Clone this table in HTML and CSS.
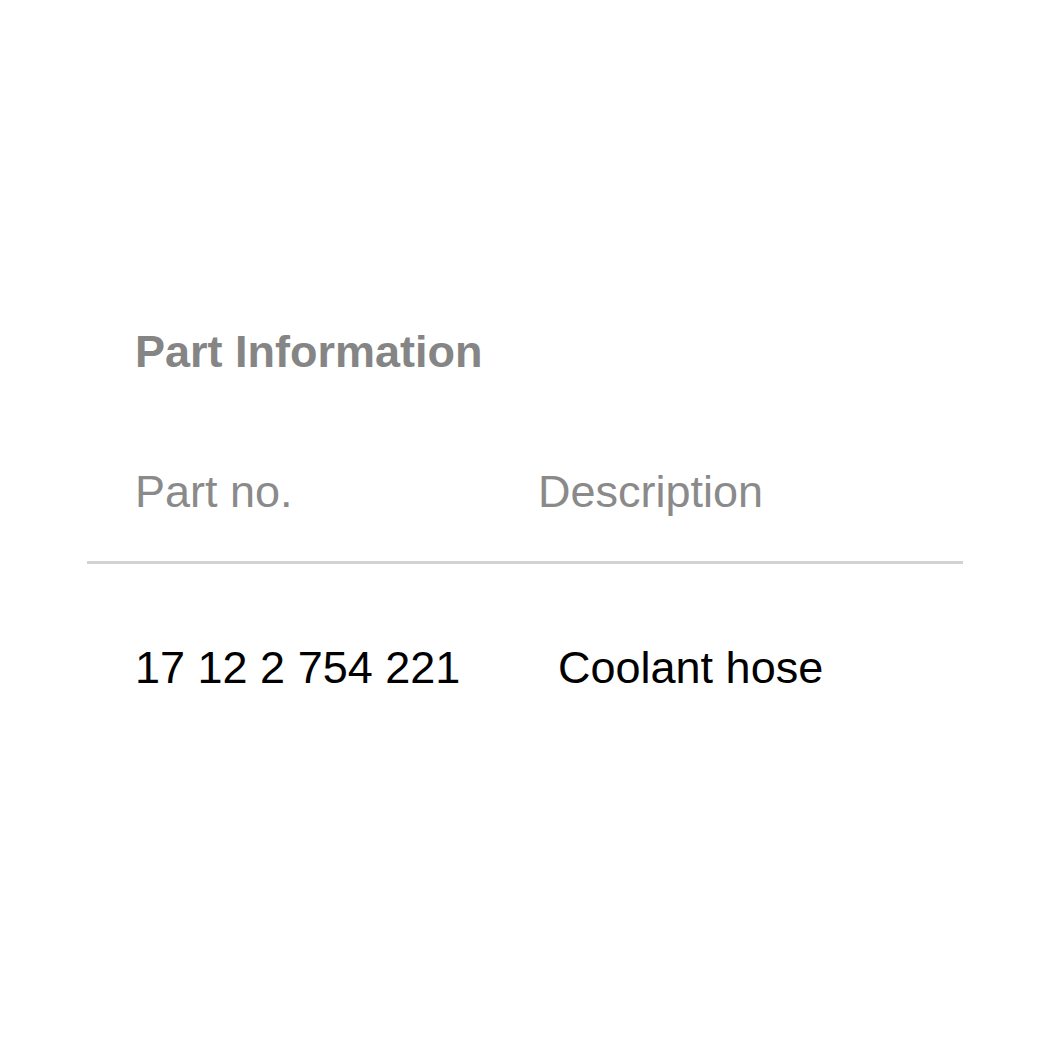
FILE: index.html
```html
<!DOCTYPE html>
<html lang="en">
  <head>
    <meta charset="UTF-8" />
    <title>Part Information</title>
    <link rel="stylesheet" href="styles.css">
  </head>
  <body>
    <div class="part-panel">
      <h2 class="panel-title">Part Information</h2>
      <div class="part-table">
        <div class="table-head">
          <div class="cell">Part no.</div>
          <div class="cell">Description</div>
        </div>
        <div class="table-row">
          <div class="cell">17 12 2 754 221</div>
          <div class="cell desc">Coolant hose</div>
        </div>
      </div>
    </div>
  </body>
</html>
```

FILE: styles.css
```css
body {
  margin: 0;
  background-color: #ffffff;
  font-family: "Liberation Sans", Arial, sans-serif;
}

.part-panel {
  width: 876px;
  margin-left: 87px;
  padding-top: 329px;
}

.panel-title {
  margin: 0;
  padding-left: 48px;
  font-size: 45px;
  line-height: 1;
  font-weight: bold;
  color: #858585;
}

.table-head,
.table-row {
  display: grid;
  grid-template-columns: 403px 1fr;
  padding-left: 48px;
  font-size: 45px;
  line-height: 1;
}

.table-head {
  margin-top: 95px;
  padding-bottom: 47px;
  border-bottom: 3px solid #d3d3d3;
  color: #8a8a8a;
}

.table-row {
  padding-top: 81px;
  color: #000000;
}

.table-row .desc {
  padding-left: 20px;
}
```
